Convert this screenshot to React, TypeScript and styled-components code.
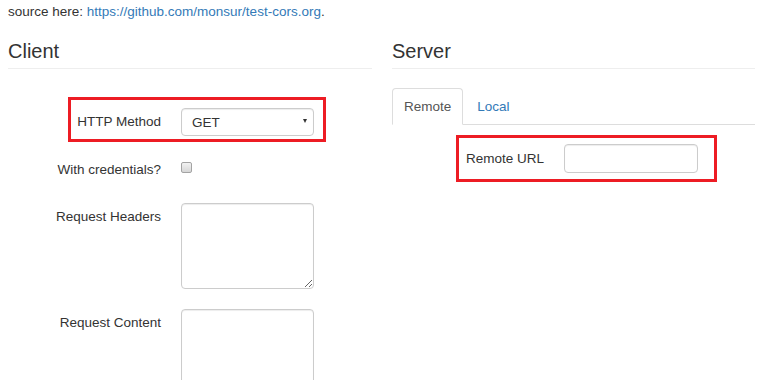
import styled, { createGlobalStyle, css } from 'styled-components'

const GlobalStyle = createGlobalStyle`
    html, body {
        margin: 0;
        overflow: hidden;
        background: #fff;
    }
    body {
        font-family: "Liberation Sans", Arial, sans-serif;
        font-size: 13.5px;
        color: #333;
    }
    *, *::before, *::after {
        box-sizing: border-box;
    }
`

interface IBox {
    left: number
    top: number
    width: number
    height: number
}

const Page = styled.div`
    padding: 2px 0 0 8px;
    width: 770px;
`

const Intro = styled.p`
    margin: 0;
    line-height: 20px;

    a {
        color: #337ab7;
        text-decoration: none;
    }
`

const Columns = styled.div`
    display: flex;
    gap: 20px;
    margin-top: 17px;
`

const Column = styled.section<{ $width: number }>`
    width: ${({ $width }) => $width}px;
`

const Heading = styled.h3`
    margin: 0;
    font-size: 20px;
    font-weight: 400;
    line-height: 24px;
    padding-bottom: 5px;
    border-bottom: 1px solid #eee;
`

const Form = styled.div<{ $top: number }>`
    display: flex;
    flex-direction: column;
    gap: 20px;
    margin-top: ${({ $top }) => $top}px;
`

const Row = styled.div<{ $label: number; $control: number; $mark?: IBox }>`
    display: grid;
    grid-template-columns: ${({ $label, $control }) => `${$label}px ${$control}px`};
    column-gap: 20px;
    align-items: start;
    position: relative;

    ${({ $mark }) =>
        $mark &&
        css`
            &::after {
                content: '';
                position: absolute;
                left: ${$mark.left}px;
                top: ${$mark.top}px;
                width: ${$mark.width}px;
                height: ${$mark.height}px;
                border: 3px solid #ed1c24;
                pointer-events: none;
            }
        `}
`

const Label = styled.label<{ $height: number }>`
    text-align: right;
    line-height: ${({ $height }) => $height}px;
    white-space: nowrap;
`

const SelectWrap = styled.div`
    position: relative;
    height: 28px;

    &::after {
        content: '';
        position: absolute;
        right: 7px;
        top: 11px;
        border-left: 2.5px solid transparent;
        border-right: 2.5px solid transparent;
        border-top: 4px solid #333;
    }
`

const Select = styled.select`
    appearance: none;
    width: 100%;
    height: 28px;
    padding: 0 10px;
    font: inherit;
    color: #333;
    background: #fff;
    border: 1px solid #ccc;
    border-radius: 4px;
    box-shadow: inset 0 1px 1px rgba(0, 0, 0, 0.075);
`

const Check = styled.input`
    appearance: none;
    width: 11px;
    height: 11px;
    margin: 6px 0 0;
    border: 1px solid #a3a3a3;
    border-radius: 2px;
    background: linear-gradient(#f2f2f2, #d6d6d6);
`

const TextArea = styled.textarea`
    width: 133px;
    height: 86px;
    border: 1px solid #ccc;
    border-radius: 4px;
    box-shadow: inset 0 1px 1px rgba(0, 0, 0, 0.075);
    font: inherit;
    resize: vertical;
`

const TextInput = styled.input`
    width: 134px;
    height: 29px;
    border: 1px solid #ccc;
    border-radius: 4px;
    box-shadow: inset 0 1px 1px rgba(0, 0, 0, 0.075);
    font: inherit;
`

const Tabs = styled.ul`
    display: flex;
    list-style: none;
    margin: 19px 0 0;
    padding: 0;
    border-bottom: 1px solid #ddd;
`

const Tab = styled.li<{ $active?: boolean }>`
    margin: 0 2px -1px 0;
    padding: 0 11px;
    line-height: 35px;
    border: 1px solid transparent;
    border-radius: 4px 4px 0 0;
    color: #337ab7;
    cursor: pointer;

    ${({ $active }) =>
        $active &&
        css`
            color: #555;
            background: #fff;
            border-color: #ddd #ddd transparent;
        `}
`

export default function App() {
    return (
        <Page>
            <GlobalStyle />
            <Intro>
                source here: <a href="#">https://github.com/monsur/test-cors.org</a>.
            </Intro>
            <Columns>
                <Column $width={364}>
                    <Heading>Client</Heading>
                    <Form $top={39}>
                        <Row
                            $label={153}
                            $control={133}
                            $mark={{ left: 60, top: -11, width: 258, height: 45 }}
                        >
                            <Label $height={28}>HTTP Method</Label>
                            <SelectWrap>
                                <Select defaultValue="GET">
                                    <option>GET</option>
                                    <option>POST</option>
                                    <option>PUT</option>
                                    <option>DELETE</option>
                                </Select>
                            </SelectWrap>
                        </Row>
                        <Row $label={153} $control={133}>
                            <Label $height={27}>With credentials?</Label>
                            <div>
                                <Check type="checkbox" />
                            </div>
                        </Row>
                        <Row $label={153} $control={133}>
                            <Label $height={28}>Request Headers</Label>
                            <TextArea />
                        </Row>
                        <Row $label={153} $control={133}>
                            <Label $height={28}>Request Content</Label>
                            <TextArea />
                        </Row>
                    </Form>
                </Column>
                <Column $width={363}>
                    <Heading>Server</Heading>
                    <Tabs>
                        <Tab $active>Remote</Tab>
                        <Tab>Local</Tab>
                    </Tabs>
                    <Form $top={19}>
                        <Row
                            $label={152}
                            $control={134}
                            $mark={{ left: 64, top: -9, width: 261, height: 47 }}
                        >
                            <Label $height={29}>Remote URL</Label>
                            <TextInput type="text" />
                        </Row>
                    </Form>
                </Column>
            </Columns>
        </Page>
    )
}
